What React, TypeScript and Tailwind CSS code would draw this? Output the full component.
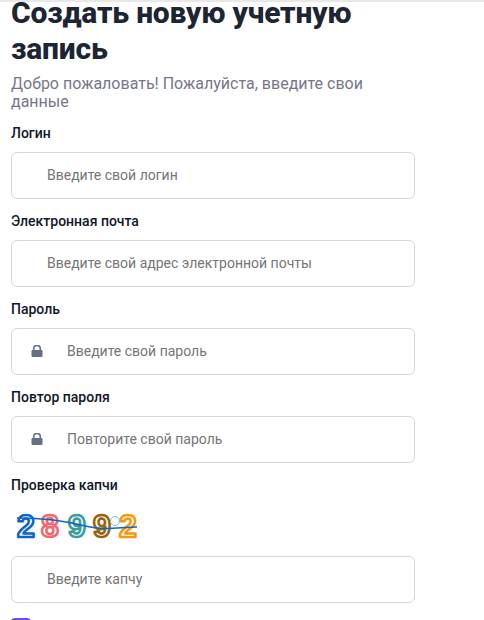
const digits = [
  { ch: "2", x: 17, color: "#0b66c9" },
  { ch: "8", x: 41, color: "#f2686f" },
  { ch: "9", x: 68, color: "#3a9d9b" },
  { ch: "9", x: 93, color: "#99640a" },
  { ch: "2", x: 119, color: "#f59a0c" },
];

function Captcha() {
  return (
    <svg width="130" height="34" viewBox="10 512 130 34" className="block" aria-label="Капча">
      {digits.map((d, i) => (
        <text
          key={i}
          x={d.x}
          y="540"
          fontFamily="'Liberation Sans', sans-serif"
          fontWeight="700"
          fontSize="32"
          fill="#ffffff"
          stroke={d.color}
          strokeWidth="2.5"
          strokeLinejoin="round"
        >
          {d.ch}
        </text>
      ))}
      <circle cx="115" cy="524" r="4.5" fill="#ffffff" stroke="#7fb8dc" strokeWidth="1" />
      <path d="M17 521 C45 521 70 525 85 529 C105 534 120 530 137 530" fill="none" stroke="#0b66c9" strokeWidth="1.6" />
    </svg>
  );
}

function LockIcon() {
  return (
    <svg width="12" height="12" viewBox="0 0 12 12" className="mt-px -ml-px shrink-0" aria-hidden>
      <path d="M2.7 5V3.7a3.3 3.3 0 0 1 6.6 0V5" fill="none" stroke="#667085" strokeWidth="1.6" />
      <rect x="0.5" y="5" width="11" height="7" rx="1.2" fill="#667085" />
    </svg>
  );
}

function Field({ label, placeholder, lock }: { label: string; placeholder: string; lock?: boolean }) {
  return (
    <div>
      <label className="block text-sm font-medium leading-5 text-[#101828]">{label}</label>
      <Input placeholder={placeholder} lock={lock} className="mt-[9px]" />
    </div>
  );
}

function Input({ placeholder, lock, className = "" }: { placeholder: string; lock?: boolean; className?: string }) {
  return (
    <div
      className={`flex h-[47px] w-[404px] items-center rounded-md border border-[#d8d8dc] bg-white pb-0.5 text-sm text-[#757575] ${className} ${lock ? "pl-5 gap-6" : "pl-[35px]"}`}
    >
      {lock && <LockIcon />}
      <span>{placeholder}</span>
    </div>
  );
}

export default function App() {
  return (
    <div className="h-[620px] w-[484px] overflow-hidden bg-white font-['Roboto',sans-serif]">
      <div className="relative z-10 h-0.5 w-full bg-[#e8e8ea]" />
      <div className="pl-[11px]">
        <h1 className="-mt-[7px] w-[404px] text-[30px] font-extrabold tracking-[-0.2px] leading-[36px] text-[#1d2433]">Создать новую учетную запись</h1>
        <p className="mt-[8px] w-[404px] text-base leading-[18px] text-[#767689]">Добро пожаловать! Пожалуйста, введите свои данные</p>
        <div className="mt-[12px] flex flex-col gap-3">
          <Field label="Логин" placeholder="Введите свой логин" />
          <Field label="Электронная почта" placeholder="Введите свой адрес электронной почты" />
          <Field label="Пароль" placeholder="Введите свой пароль" lock />
          <Field label="Повтор пароля" placeholder="Повторите свой пароль" lock />
          <div>
            <label className="block text-sm font-medium leading-5 text-[#101828]">Проверка капчи</label>
            <div className="mt-[14px] -ml-[1px]">
              <Captcha />
            </div>
            <Input placeholder="Введите капчу" className="mt-[13px]" />
            <div className="mt-[15px] h-5 w-5 rounded bg-[#6d4ae8]" />
          </div>
        </div>
      </div>
    </div>
  );
}
